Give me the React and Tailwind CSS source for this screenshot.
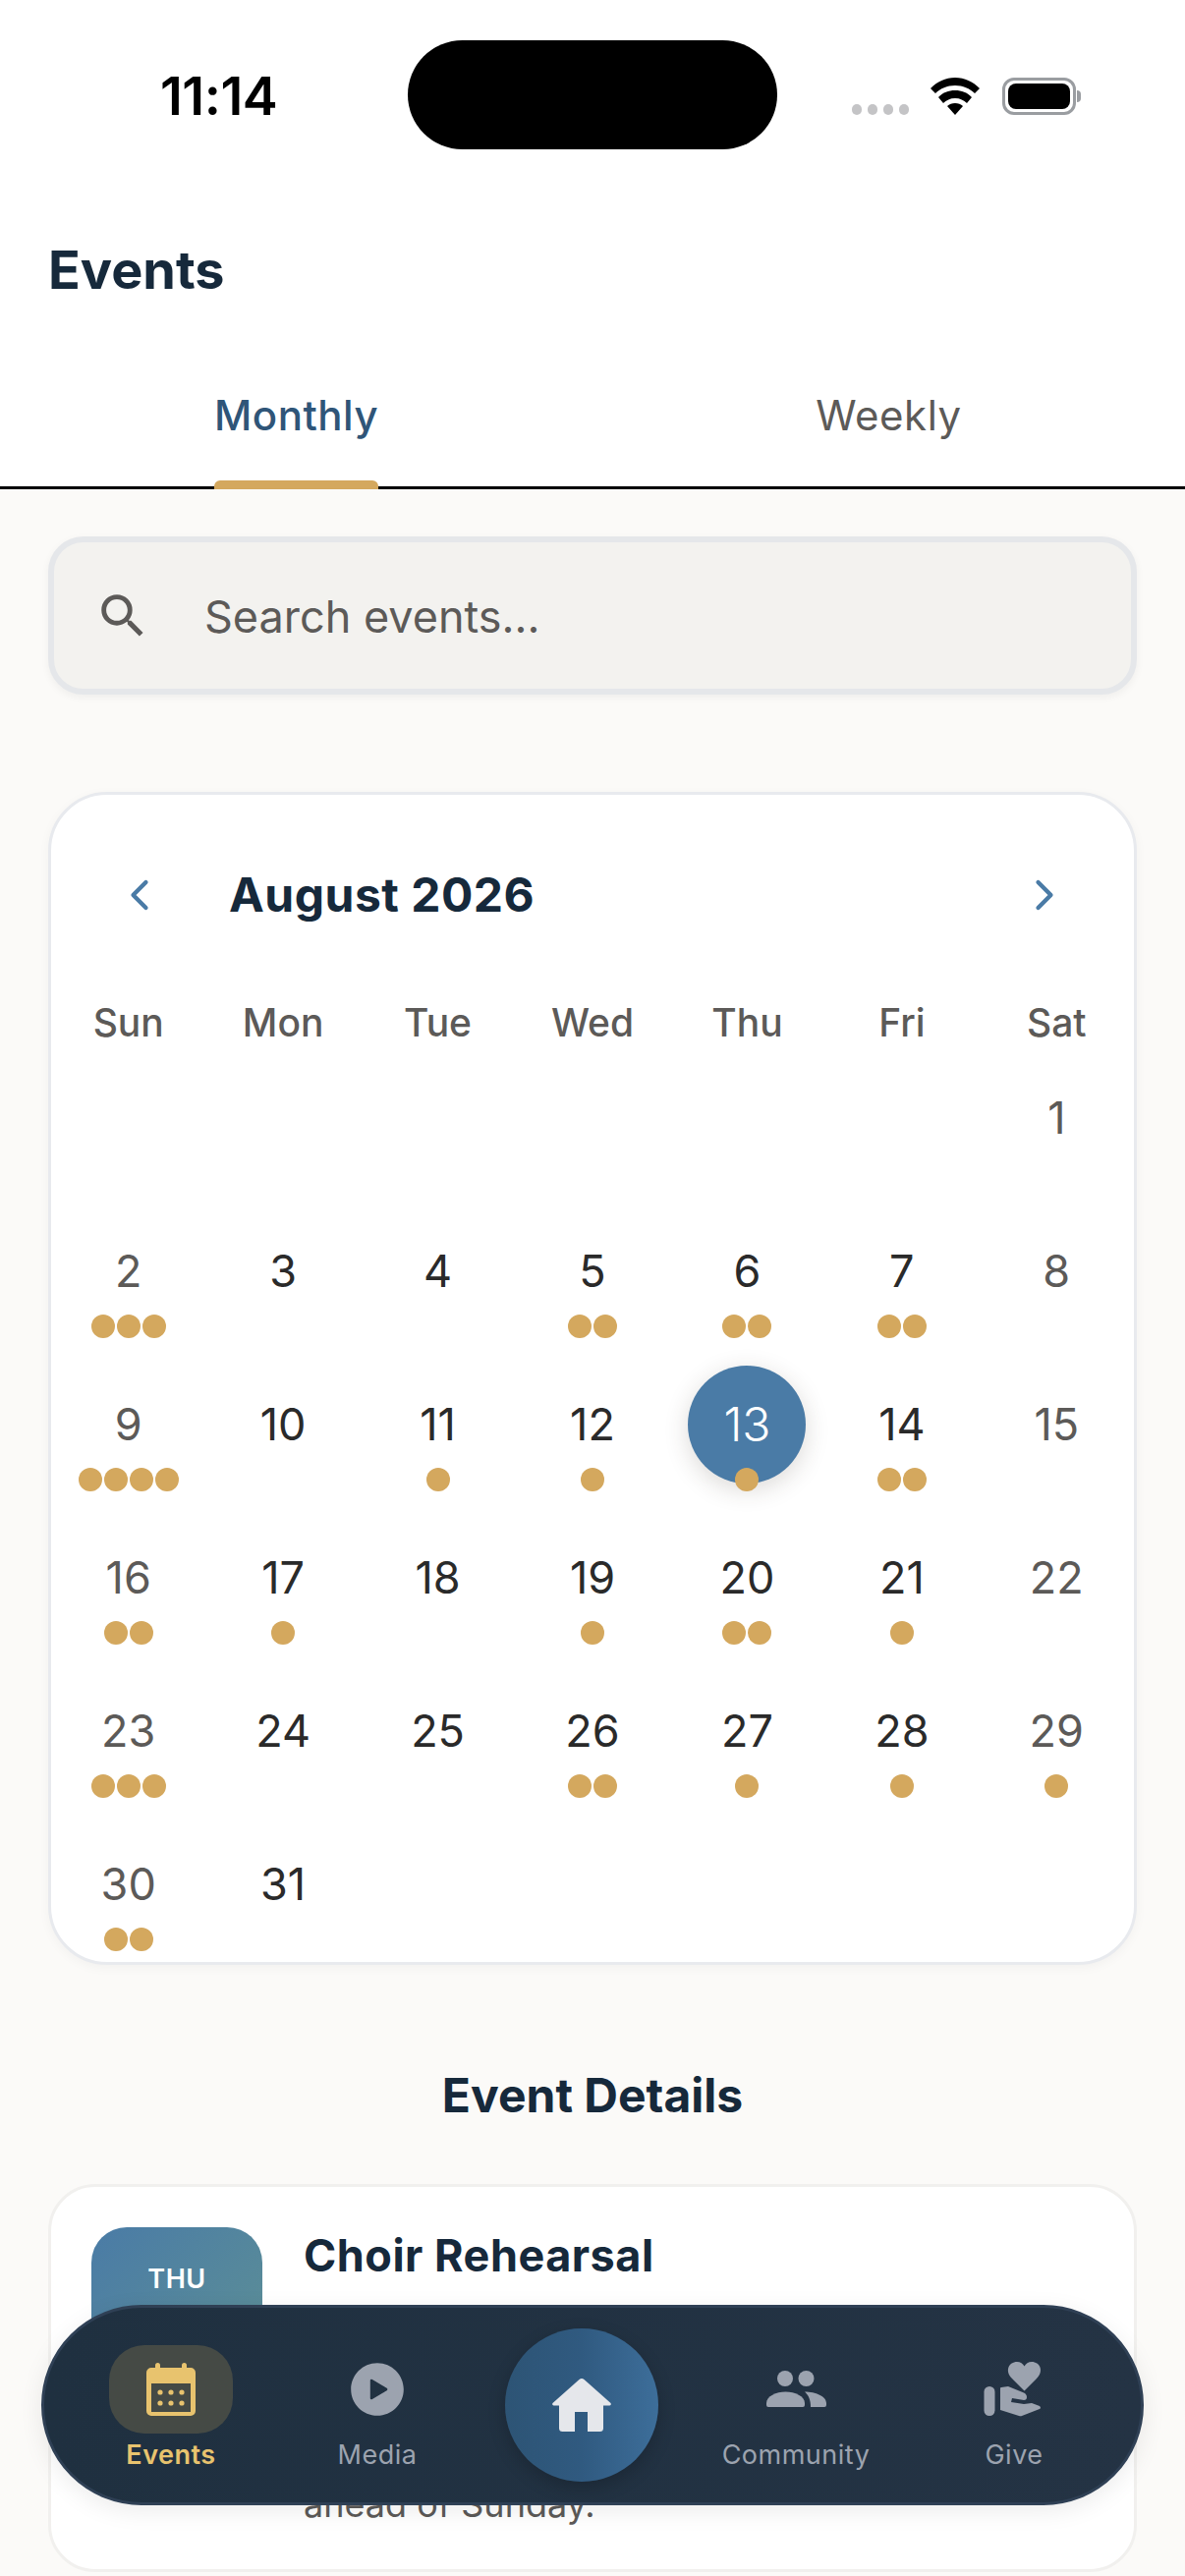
import { MdSearch } from "react-icons/md";
import { IoChevronBack, IoChevronForward, IoPlayCircle } from "react-icons/io5";

const weekdays = ["Sun", "Mon", "Tue", "Wed", "Thu", "Fri", "Sat"];

// day number -> how many event dots it gets
const dots = {
  2: 3, 5: 2, 6: 2, 7: 2,
  9: 4, 11: 1, 12: 1, 13: 1, 14: 2,
  16: 2, 17: 1, 19: 1, 20: 2, 21: 1,
  23: 3, 26: 2, 27: 1, 28: 1, 29: 1,
  30: 2,
};

const CalendarIcon = () => (
  <svg viewBox="0 0 50 54" className="w-[50px] h-[54px]" fill="#E8C36E">
    <rect x="9" y="0" width="5" height="10" rx="2.5" />
    <rect x="36" y="0" width="5" height="10" rx="2.5" />
    <path fillRule="evenodd" d="M5 5h40a5 5 0 0 1 5 5v39a5 5 0 0 1-5 5H5a5 5 0 0 1-5-5V10a5 5 0 0 1 5-5zM5 21v29h40V21z" />
    <circle cx="14" cy="30" r="2.6" /><circle cx="25" cy="30" r="2.6" /><circle cx="36" cy="30" r="2.6" />
    <circle cx="14" cy="41" r="2.6" /><circle cx="25" cy="41" r="2.6" /><circle cx="36" cy="41" r="2.6" />
  </svg>
);

const HomeIcon = () => (
  <svg viewBox="0 0 60 54" className="w-[60px] h-[54px]" fill="#E5E7EB">
    <path d="M27.5 1 Q30 -1 32.500 1 L59.500 25 Q60.500 27 58.500 27.500 L52 27.500 L52 50.500 Q52 54 48.500 54 L36 54 L36 34 L23 34 L23 54 L10.500 54 Q7 54 7 50.500 L7 27.500 L1.500 27.500 Q-0.500 27 0.500 25 Z" />
  </svg>
);

const PeopleIcon = () => (
  <svg viewBox="0 0 80 55" className="w-[80px] h-[55px]" fill="#9CA3AF">
    <circle cx="29" cy="16" r="8" />
    <circle cx="50.500" cy="16" r="8" />
    <path d="M10 41 C10 34 20 29.500 29.500 29.500 C39 29.500 49 34 49 41 L49 43 Q49 45 47 45 L12 45 Q10 45 10 43 Z" />
    <path d="M49 29.500 C60 29.500 71 34 71 41 L71 43 Q71 45 69 45 L55 45 C55 38 53 33 49 29.500 Z" />
  </svg>
);

const GiveIcon = () => (
  <svg viewBox="2 0 80 75" className="w-[80px] h-[75px]" fill="#9CA3AF">
    <path d="M52.500 38.500 L40 26 C32 18 37 9 45 9 C48.500 9 51 11 52.500 13.500 C54 11 56.500 9 60 9 C68 9 73 18 65 26 Z" />
    <rect x="11.500" y="34" width="11" height="30" rx="5.500" />
    <path d="M28 36 Q28 35 29 35 L36 34 L52 40.500 Q55 42 55 45 Q55 48 52 48 L40 46 L39 50 L52 52 L60 51 L68 54 Q70 56 68 57 L50 64 Q49 64.500 47 64 L28 58 Z" />
  </svg>
);

function Dot() {
  return <span className="w-6 h-6 rounded-full bg-[#D4A85E]" />;
}

function DayCell({ day }) {
  const count = dots[day] || 0;
  const col = (day + 5) % 7;
  const weekend = col === 0 || col === 6;
  const selected = day === 13;
  let color = weekend ? "text-[#5C5A58]" : "text-[#2A2A2A]";
  if (selected) color = "text-white";
  return (
    <div className="relative h-[156px] flex flex-col items-center">
      <div
        className={`mt-[12px] w-[120px] h-[120px] rounded-full flex items-center justify-center ${color} ${
          selected
            ? "text-[48px] font-light bg-[#4A7BA6] shadow-[0_6px_24px_rgba(60,50,40,0.18)]"
            : "text-[45px]"
        }`}
      >
        {day}
      </div>
      {count > 0 && (
        <div className="absolute top-[116px] flex gap-[2px]">
          {Array.from({ length: count }, (_, i) => (
            <Dot key={i} />
          ))}
        </div>
      )}
    </div>
  );
}

function NavItem({ label, icon, active }) {
  return (
    <div className="flex flex-col items-center w-[126px]">
      <div
        className={`w-[126px] h-[90px] rounded-[36px] flex items-center justify-center ${
          active ? "bg-[#454A45]" : ""
        }`}
      >
        {icon}
      </div>
      <span
        className={`text-[27px] leading-[44px] whitespace-nowrap tracking-[0.5px] ${
          active ? "text-[#E8C36E] font-semibold" : "text-[#9CA3AF]"
        }`}
      >
        {label}
      </span>
    </div>
  );
}

export default function App() {
  const blanks = Array.from({ length: 6 });
  const days = Array.from({ length: 31 }, (_, i) => i + 1);

  return (
    <div className="relative w-[1206px] h-[2622px] overflow-hidden bg-[#FBFAF8] font-['Inter',sans-serif]">
      {/* status bar + header */}
      <div className="bg-white">
        <div className="h-[195px] flex items-center justify-between pl-[163px] pr-[106px]">
          <span className="text-[54px] font-semibold text-black tracking-[-0.5px] leading-none">11:14</span>
          <div className="flex items-center">
            <div className="flex gap-[6px] mt-[28px] mr-[22px]">
              {[0, 1, 2, 3].map((i) => (
                <span key={i} className="w-[10px] h-[11px] rounded-full bg-[#C4C4C6]" />
              ))}
            </div>
            <svg viewBox="0 0 50 38" className="w-[50px] h-[38px] mr-[23px]" fill="#000">
              <path d="M25 0C15 0 7 4 0 11l5 5c5-5 12-8 20-8s15 3 20 8l5-5C43 4 35 0 25 0z" />
              <path d="M25 13c-7 0-12 2-17 7l5 6c3-3 7-5 12-5s9 2 12 5l5-6c-5-5-10-7-17-7z" />
              <path d="M25 26c-3 0-6 1-8 3l8 9 8-9c-2-2-5-3-8-3z" />
            </svg>
            <div className="w-[75px] h-[38px] rounded-[12px] border-[3px] border-[#9A9DA1] p-[3px]">
              <div className="w-full h-full rounded-[8px] bg-black" />
            </div>
            <span className="ml-[1px] w-[4px] h-[12px] rounded-r-full bg-[#9A9DA1]" />
          </div>
        </div>
        <h1 className="pl-[49px] mt-[45px] text-[54px] leading-[70px] font-bold text-[#16293B]">Events</h1>
        <div className="flex mt-[70px] h-[118px] border-b-[3px] border-black">
          <div className="w-1/2 flex justify-center">
            <div className="relative h-full w-[167px] flex justify-center pt-[14px]">
              <span className="text-[42px] leading-[58px] font-medium text-[#2F5578] tracking-[0.5px]">Monthly</span>
              <span className="absolute left-0 right-0 bottom-[-3px] h-[9px] rounded-t-[6px] bg-[#D4A85E]" />
            </div>
          </div>
          <div className="w-1/2 flex justify-center pt-[14px]">
            <span className="text-[42px] leading-[58px] text-[#5C5A58] tracking-[0.5px]">Weekly</span>
          </div>
        </div>
      </div>

      {/* search */}
      <div className="mx-[49px] mt-[48px] h-[161px] rounded-[36px] border-[6px] border-[#E5E7EA] bg-[#F3F2EF] flex items-center pl-[41px] shadow-[0_3px_9px_rgba(0,0,0,0.05)]">
        <MdSearch className="w-[58px] h-[58px] text-[#5C5A58]" />
        <span className="ml-[54px] mt-[2px] text-[45px] text-[#5C5A58]">Search events...</span>
      </div>

      {/* calendar */}
      <div className="mx-[49px] mt-[99px] h-[1194px] rounded-[60px] border-[3px] border-[#E8EAEE] bg-white overflow-hidden shadow-[0_3px_12px_rgba(0,0,0,0.04)]">
        <div className="flex items-center h-[124px] mt-[40px]">
          <IoChevronBack className="ml-[67px] w-[46px] h-[46px] text-[#4A7BA6]" />
          <span className="ml-[68px] text-[48px] font-bold text-[#16293B] tracking-[0.5px]">August 2026</span>
          <IoChevronForward className="ml-auto mr-[68px] w-[46px] h-[46px] text-[#4A7BA6]" />
        </div>
        <div className="grid grid-cols-7 mt-[38px] h-[60px] items-center">
          {weekdays.map((w) => (
            <span key={w} className="text-center text-[39px] font-medium text-[#5C5A58]">
              {w}
            </span>
          ))}
        </div>
        <div className="grid grid-cols-7 mt-[-5px]">
          {blanks.map((_, i) => (
            <div key={i} className="h-[156px]" />
          ))}
          {days.map((d) => (
            <DayCell key={d} day={d} />
          ))}
        </div>
      </div>

      {/* event details */}
      <h2 className="mt-[100px] text-center text-[48px] leading-[66px] font-bold text-[#16293B]">Event Details</h2>
      <div className="mx-[49px] mt-[57px] h-[395px] rounded-[48px] border-[3px] border-[#F1F0EE] bg-white flex pl-[41px] pt-[41px] pb-[39px] gap-[42px]">
        <div className="w-[174px] h-[174px] rounded-[36px] bg-gradient-to-br from-[#4A7BA6] to-[#5F9193] flex flex-col items-center pt-[33px] shrink-0">
          <span className="text-[27px] leading-[40px] font-semibold text-white tracking-[0.5px]">THU</span>
        </div>
        <div className="flex flex-col">
          <h3 className="text-[45px] leading-[58px] font-bold text-[#16293B] tracking-[0.5px]">Choir Rehearsal</h3>
          <p className="mt-auto text-[36px] leading-[54px] text-[#5C5A58]">ahead of Sunday.</p>
        </div>
      </div>

      {/* bottom nav, floats over the page */}
      <div className="absolute left-[42px] top-[2346px] w-[1122px] h-[204px] rounded-[102px] border-[3px] border-[#2F4055] bg-gradient-to-r from-[#1F3040] to-[#243344] flex items-start shadow-[0_6px_24px_rgba(0,0,0,0.08)]">
        <div className="ml-[66px] mt-[38px]">
          <NavItem label="Events" active icon={<CalendarIcon />} />
        </div>
        <div className="ml-[84px] mt-[38px]">
          <NavItem label="Media" icon={<IoPlayCircle className="w-[66px] h-[66px] text-[#9CA3AF]" />} />
        </div>
        <div className="ml-[67px] mt-[21px] w-[156px] h-[156px] rounded-full bg-gradient-to-r from-[#2D5475] via-[#305A80] to-[#3D6E9A] flex items-center justify-center shadow-[0_6px_18px_rgba(0,0,0,0.2)]">
          <HomeIcon />
        </div>
        <div className="ml-[77px] mt-[38px]">
          <NavItem label="Community" icon={<PeopleIcon />} />
        </div>
        <div className="ml-[96px] mt-[38px]">
          <NavItem label="Give" icon={<GiveIcon />} />
        </div>
      </div>

      {/* dynamic island */}
      <div className="absolute left-[415px] top-[41px] w-[376px] h-[111px] rounded-[56px] bg-black" />
    </div>
  );
}
